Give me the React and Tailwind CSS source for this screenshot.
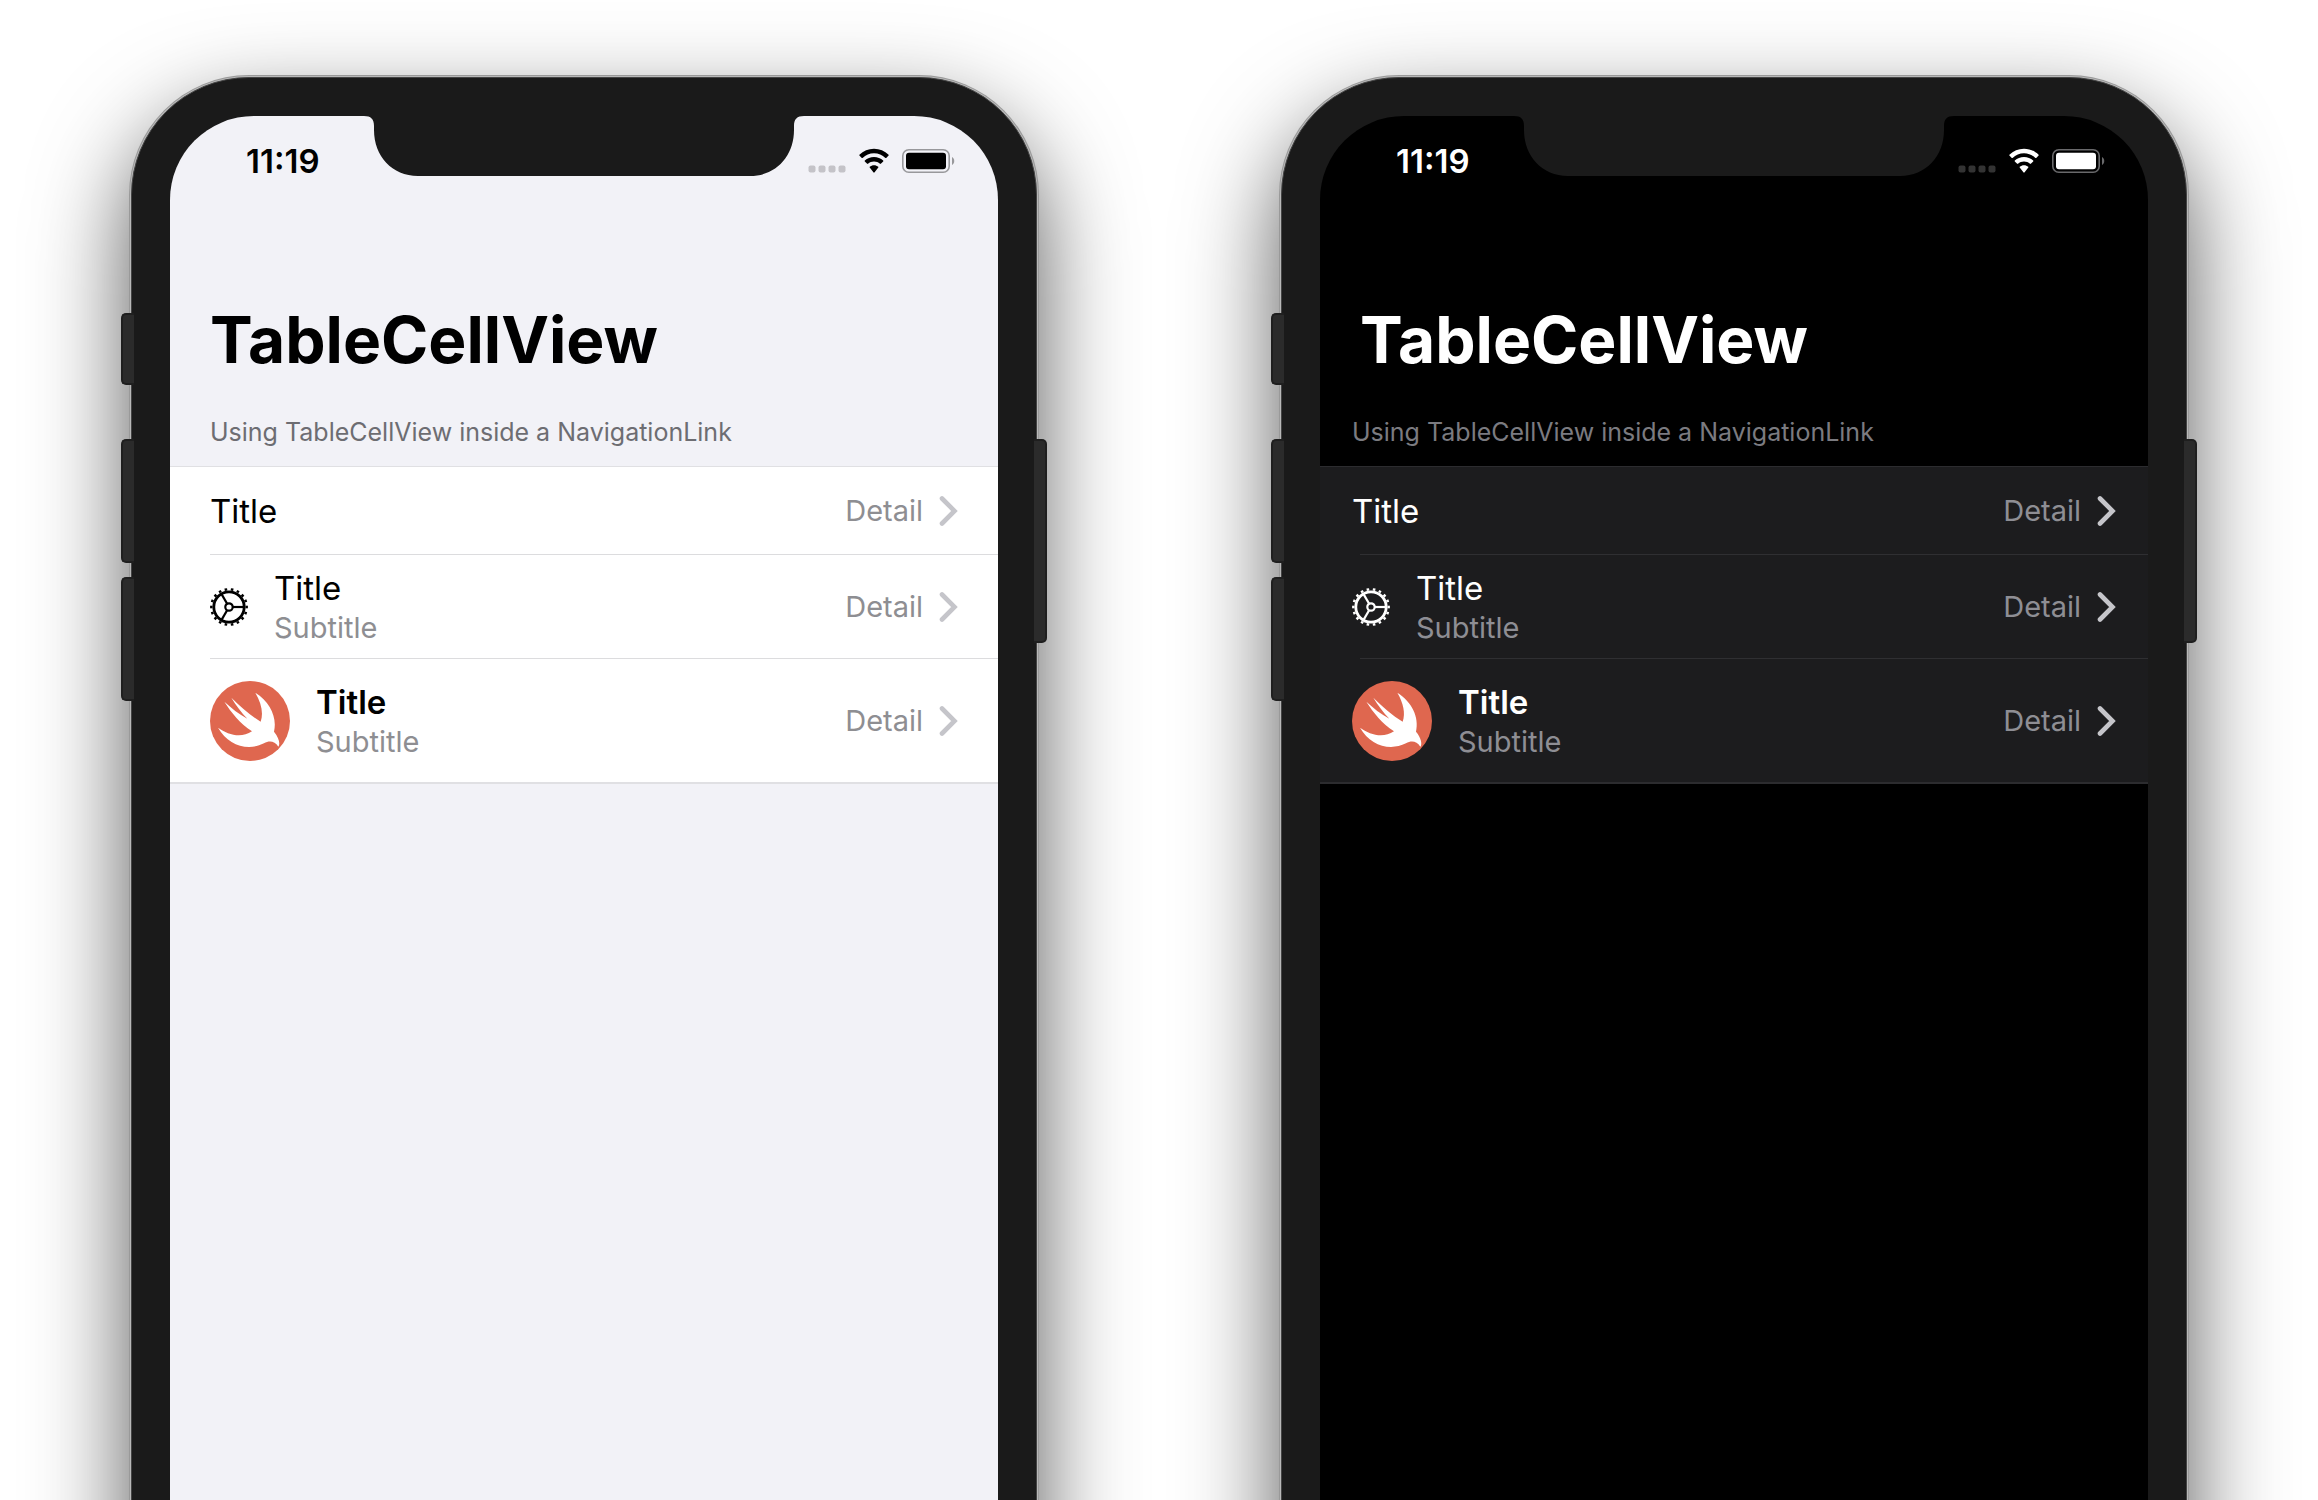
import React from "react";

const themes = {
  light: {
    screen: "bg-[#f2f2f7] text-black",
    header: "px-10 text-[#6d6d72]",
    list: "bg-white border-[#e0e0e3]",
    line: "bg-[#dcdcde]",
    row: "px-10",
    secondary: "text-[#8e8e92]",
    chevron: "text-[#c5c5ca]",
    dots: "text-[#c4c3c8]",
    outline: "text-[#98989b]",
  },
  dark: {
    screen: "bg-black text-white",
    header: "px-8 text-[#7b7b80]",
    list: "bg-[#1c1c1e] border-[#2c2c2f]",
    line: "bg-[#2f2f32]",
    row: "px-8",
    secondary: "text-[#8e8e94]",
    chevron: "text-[#c5c5ca]",
    dots: "text-[#333333]",
    outline: "text-[#69696b]",
  },
};

const teeth = Array.from({ length: 18 }, (_, i) => i * 20);

function GearIcon() {
  return (
    <svg className="size-[38px] shrink-0 overflow-visible" viewBox="0 0 38 38" fill="none" stroke="currentColor" strokeWidth="2.8" aria-hidden="true">
      <circle cx="19" cy="19" r="15.2" />
      <circle cx="19" cy="19" r="3.7" strokeWidth="2.2" />
      {teeth.map((a) => (
        <path key={a} d="M35.5 19H37.9" strokeWidth="2.6" transform={`rotate(${a} 19 19)`} />
      ))}
      {[0, 120, 240].map((a) => (
        <path key={a} d="M23 19H34.5" strokeWidth="2.2" transform={`rotate(${a} 19 19)`} />
      ))}
    </svg>
  );
}

function SwiftIcon() {
  return (
    <svg className="size-20 shrink-0" viewBox="0 0 240 240" aria-hidden="true">
      <circle cx="120" cy="120" r="120" fill="#df674f" />
      <path
        fill="#fff"
        d="M136 35C180 63 202 108 192 152C208 171 211 190 205 197C194 180 178 178 162 187C112 212 54 192 24 140C54 162 94 172 126 151C90 127 64 95 43 62C63 80 87 100 112 113C94 94 78 73 64 50C90 76 122 104 152 122C161 96 154 66 136 35Z"
      />
    </svg>
  );
}

function Chevron({ className }) {
  return (
    <svg className={"h-8 w-[19px] shrink-0 " + className} viewBox="0 0 19 32" fill="none" stroke="currentColor" strokeWidth="4.6" strokeLinecap="round" strokeLinejoin="miter" aria-hidden="true">
      <path d="M3 3.5L15.5 16L3 28.5" />
    </svg>
  );
}

function StatusBar({ t }) {
  return (
    <div className="flex h-[90px] items-center justify-between pr-[43px] pl-[76px]">
      <time className="text-[33px] leading-10 font-semibold">11:19</time>
      <div className="flex items-center">
        <svg className={"mr-3 h-6 w-[38px] " + t.dots} viewBox="0 0 38 24" fill="currentColor" aria-hidden="true">
          {[0, 10, 20, 30].map((x) => (
            <rect key={x} x={x + 0.5} y="16.5" width="7" height="7" rx="2" />
          ))}
        </svg>
        <svg className="mr-3 h-6 w-8 overflow-visible" viewBox="0 0 32 24" fill="currentColor" aria-hidden="true">
          <path d="M16 4.3c4.4 0 8.4 1.7 11.4 4.6.2.2.6.2.8 0l2.4-2.4c.2-.2.2-.6 0-.8C26.7 2 21.6-.3 16-.3S5.3 2 1.4 5.7c-.2.2-.2.6 0 .8l2.4 2.4c.2.2.6.2.8 0C7.6 6 11.6 4.3 16 4.3z" />
          <path d="M16 12.5c2.3 0 4.4.9 6 2.3.2.2.6.2.8 0l2.4-2.4c.2-.2.2-.6 0-.8C22.8 9.3 19.5 8 16 8s-6.8 1.3-9.2 3.6c-.2.2-.2.6 0 .8l2.4 2.4c.2.2.6.2.8 0 1.6-1.4 3.7-2.3 6-2.3z" />
          <path d="M20.3 18.6c.2-.2.2-.6 0-.8-1.2-1-2.7-1.6-4.3-1.6s-3.1.6-4.3 1.6c-.2.2-.2.6 0 .8l3.9 4.9c.2.2.6.2.8 0z" />
        </svg>
        <svg className="h-6 w-[53px]" viewBox="0 0 53 24" aria-hidden="true">
          <g className={t.outline}>
            <rect x=".8" y=".8" width="46.4" height="22.4" rx="6" fill="none" stroke="currentColor" strokeWidth="1.6" />
            <path d="M50 8c3 1.5 3 6.5 0 8z" fill="currentColor" />
          </g>
          <rect x="4" y="3.7" width="40" height="16.6" rx="3" fill="currentColor" />
        </svg>
      </div>
    </div>
  );
}

function TableCell({ t, icon, title, bold, subtitle, detail, size }) {
  return (
    <a href="#" className={"flex items-center " + t.row + " " + size}>
      {icon && <span className="mr-[26px]">{icon}</span>}
      <span className={"grow " + (subtitle ? "pt-0.5" : "")}>
        <span className={"block text-[33px] leading-10 " + (bold ? "font-semibold" : "font-normal")}>{title}</span>
        {subtitle && <span className={"block text-[29px] leading-10 " + t.secondary}>{subtitle}</span>}
      </span>
      <span className={"mr-4 text-[29px] leading-10 " + t.secondary}>{detail}</span>
      <Chevron className={t.chevron} />
    </a>
  );
}

function SideButton({ className }) {
  return <span className={"absolute w-[13px] border-[#1f1f1f] bg-[#2b2b2b] " + className} />;
}

function Phone({ theme }) {
  const t = themes[theme];
  return (
    <section className="relative aspect-[906/1870] w-full max-w-[906px] rounded-[118px] border border-[#444444] bg-[#1a1a1a] p-[38px] shadow-[0_0_0_1px_#b8b8b8,0_0_0_2px_#999999,0_40px_96px_0_rgba(0,0,0,0.68)]">
      <SideButton className="top-[235px] -left-[11px] h-[72px] rounded-l-[5px] border-y-2 border-l-2" />
      <SideButton className="top-[361px] -left-[11px] h-[124px] rounded-l-[5px] border-y-2 border-l-2" />
      <SideButton className="top-[499px] -left-[11px] h-[124px] rounded-l-[5px] border-y-2 border-l-2" />
      <SideButton className="top-[361px] -right-[11px] h-[204px] rounded-r-[5px] border-y-2 border-r-2" />
      <div className={"relative h-full overflow-hidden rounded-[84px] " + t.screen}>
        <svg className="absolute top-0 left-1/2 h-[60px] w-[440px] -translate-x-1/2" viewBox="0 0 440 60" fill="#1a1a1a" aria-hidden="true">
          <path d="M0 0C7 0 10 3 10 10V14C10 40 28 60 54 60H386C412 60 430 40 430 14V10C430 3 433 0 440 0Z" />
        </svg>
        <StatusBar t={t} />
        <h1 className="mt-[94px] px-10 text-[64px] leading-20 font-bold">TableCellView</h1>
        <h2 className={"mt-9 pb-[18px] text-[25px] leading-8 " + t.header}>Using TableCellView inside a NavigationLink</h2>
        <ul className={"border-t border-b-2 " + t.list}>
          <li>
            <TableCell t={t} title="Title" detail="Detail" size="min-h-[87px]" />
            <div className={"ml-10 h-px " + t.line} />
          </li>
          <li>
            <TableCell t={t} icon={<GearIcon />} title="Title" subtitle="Subtitle" detail="Detail" size="min-h-[103px]" />
            <div className={"ml-10 h-px " + t.line} />
          </li>
          <li>
            <TableCell t={t} icon={<SwiftIcon />} title="Title" bold subtitle="Subtitle" detail="Detail" size="min-h-[123px]" />
          </li>
        </ul>
      </div>
    </section>
  );
}

export default function App() {
  return (
    <main className="flex h-screen items-start justify-center gap-[244px] overflow-hidden bg-white px-[131px] pt-[77px] font-[Inter,sans-serif]">
      <Phone theme="light" />
      <Phone theme="dark" />
    </main>
  );
}
